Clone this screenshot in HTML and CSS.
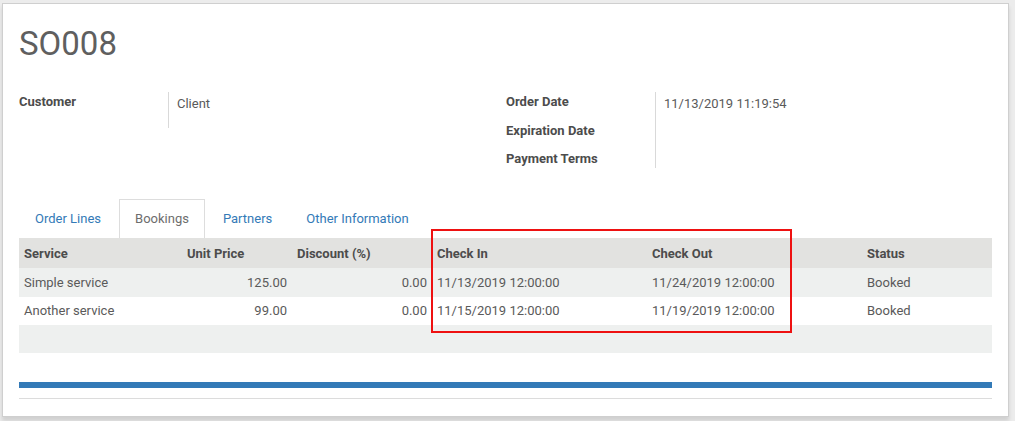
FILE: index.html
```html
<!DOCTYPE html>
<html>
<head>
<meta charset="utf-8">
<link rel="stylesheet" href="styles.css">
</head>
<body>
<div class="sheet">
  <h1 class="title">SO008</h1>
  <div class="groups">
    <div class="group">
      <div class="labels">
        <div class="label">Customer</div>
      </div>
      <div class="values values-left">
        <div class="value">Client</div>
      </div>
    </div>
    <div class="group">
      <div class="labels">
        <div class="label">Order Date</div>
        <div class="label">Expiration Date</div>
        <div class="label">Payment Terms</div>
      </div>
      <div class="values values-right">
        <div class="value">11/13/2019 11:19:54</div>
      </div>
    </div>
  </div>
  <div class="tabs">
    <div class="tab">Order Lines</div>
    <div class="tab active">Bookings</div>
    <div class="tab">Partners</div>
    <div class="tab">Other Information</div>
  </div>
  <div class="table-wrap">
    <table class="grid">
      <colgroup>
        <col class="c1"><col class="c2"><col class="c3"><col class="c4"><col class="c5"><col class="c6">
      </colgroup>
      <thead>
        <tr><th>Service</th><th>Unit Price</th><th>Discount (%)</th><th>Check In</th><th>Check Out</th><th>Status</th></tr>
      </thead>
      <tbody>
        <tr class="odd"><td>Simple service</td><td class="num">125.00</td><td class="num">0.00</td><td>11/13/2019 12:00:00</td><td>11/24/2019 12:00:00</td><td>Booked</td></tr>
        <tr><td>Another service</td><td class="num">99.00</td><td class="num">0.00</td><td>11/15/2019 12:00:00</td><td>11/19/2019 12:00:00</td><td>Booked</td></tr>
        <tr class="odd empty"><td></td><td></td><td></td><td></td><td></td><td></td></tr>
      </tbody>
    </table>
    <div class="highlight"></div>
  </div>
  <div class="bar"></div>
  <div class="rule"></div>
</div>
</body>
</html>
```

FILE: styles.css
```css
html, body {
  margin: 0;
  padding: 0;
}
body {
  background: #ececec;
  font-family: Roboto, "Liberation Sans", sans-serif;
  font-size: 13px;
  color: #4c4c4c;
  width: 1015px;
  height: 421px;
  overflow: hidden;
}
.sheet {
  margin: 3px 0 0 2px;
  width: 973px;
  height: 396px;
  padding: 0 16px 16px 16px;
  background: #fff;
  border: 1px solid #cfcfcf;
  box-shadow: 0 4px 4px rgba(0,0,0,0.12);
}
.title {
  margin: 0;
  padding-top: 21px;
  font-size: 33px;
  font-weight: 400;
  line-height: 38px;
  color: #5f5f5f;
  height: 38px;
}
.groups {
  display: flex;
  margin-top: 29px;
}
.group {
  display: flex;
  width: 487px;
  align-items: flex-start;
}
.group + .group {
  width: 486px;
}
.labels {
  width: 149px;
  padding-top: 1px;
}
.label {
  font-weight: 700;
  line-height: 18px;
  height: 28.5px;
  color: #4c4c4c;
}
.label:nth-child(2) {
  height: 28px;
}
.label:last-child {
  height: 18px;
}
.values {
  border-left: 1px solid #d9d9d9;
  padding-left: 8px;
}
.values-left {
  height: 36px;
}
.values-right {
  height: 76px;
}
.value {
  line-height: 18px;
  padding-top: 3px;
  color: #5a5a5a;
}
.tabs {
  display: flex;
  margin-top: 31px;
  height: 39px;
}
.tab {
  padding: 0 15px;
  margin-right: 2px;
  border: 1px solid transparent;
  border-bottom: none;
  line-height: 38px;
  color: #337ab7;
}
.tab.active {
  color: #6d6d6d;
  border-color: #dddddd;
  background: #fff;
}
.table-wrap {
  position: relative;
}
.grid {
  width: 973px;
  border-collapse: collapse;
  table-layout: fixed;
}
.c1 { width: 163px; }
.c2 { width: 110px; }
.c3 { width: 140px; }
.c4 { width: 215px; }
.c5 { width: 215px; }
.c6 { width: 130px; }
.grid th {
  background: #e2e2e0;
  text-align: left;
  font-weight: 700;
  color: #4c4c4c;
  height: 30px;
  padding: 0 5px;
  box-sizing: border-box;
}
.grid td {
  height: 28.5px;
  padding: 0 5px;
  color: #5a5a5a;
  white-space: nowrap;
}
.grid tr.odd td {
  background: #eef0ef;
}
.grid tr.empty td {
  height: 28px;
}
.grid td.num {
  text-align: right;
}
.highlight {
  position: absolute;
  left: 412px;
  top: -9px;
  width: 357px;
  height: 100px;
  border: 2px solid #ee1111;
  pointer-events: none;
}
.bar {
  margin-top: 29px;
  height: 6px;
  background: #337ab7;
}
.rule {
  margin-top: 10px;
  height: 1px;
  background: #dcdcdc;
}
```
